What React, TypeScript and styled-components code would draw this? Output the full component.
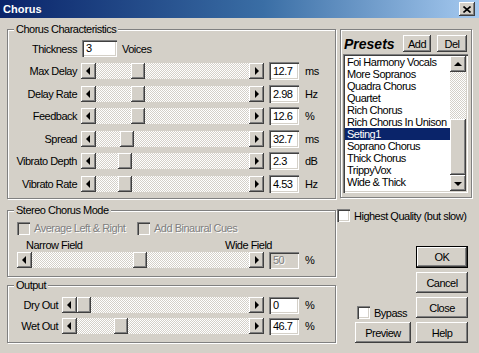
import React from "react";
import styled, { createGlobalStyle, css } from "styled-components";

const GlobalStyle = createGlobalStyle`
  html, body {
    margin: 0;
    padding: 0;
    background: #d4d0c8;
  }
  body {
    font-family: "Liberation Sans", Arial, sans-serif;
    font-size: 11px;
    letter-spacing: -0.5px;
    color: #000;
  }
`;

const raised = css`
  background: #d4d0c8;
  box-shadow: inset -1px -1px #404040, inset 1px 1px #fff, inset -2px -2px #808080;
`;

const sunken = css`
  box-shadow: inset 1px 1px #808080, inset 2px 2px #404040, inset -1px -1px #fff,
    inset -2px -2px #d4d0c8;
`;

const checker = css`
  background: repeating-conic-gradient(#fff 0 25%, #d4d0c8 0 50%) 0 0 / 2px 2px;
`;

const Window = styled.div`
  width: 479px;
  height: 353px;
  overflow: hidden;
  background: #d4d0c8;
`;

const TitleBar = styled.div`
  height: 18px;
  display: flex;
  align-items: center;
  padding: 0 4px 0 3px;
  background: linear-gradient(to right, #0a246a, #3a6ea5 55%, #a6caf0);
`;

const Title = styled.span`
  color: #fff;
  font-weight: bold;
  font-size: 11px;
  letter-spacing: 0;
`;

const CloseButton = styled.div`
  ${raised};
  margin-left: auto;
  width: 16px;
  height: 14px;
  display: grid;
  place-items: center;
`;

const Body = styled.div`
  display: flex;
  padding-left: 7px;
`;

const LeftCol = styled.div`
  width: 329px;
  display: flex;
  flex-direction: column;
`;

const RightCol = styled.div`
  flex: 1;
  margin-left: 1px;
  display: flex;
  flex-direction: column;
`;

const Group = styled.div<{ $mt: number; $pt: number; $pb: number; $pl?: number; $w?: number }>`
  position: relative;
  margin-top: ${(p) => p.$mt}px;
  padding: ${(p) => p.$pt}px 0 ${(p) => p.$pb}px ${(p) => p.$pl ?? 0}px;
  width: ${(p) => (p.$w ? `${p.$w}px` : "auto")};
  border: 1px solid #808080;
  box-shadow: inset 1px 1px #fff, 1px 1px #fff;
  box-sizing: border-box;
`;

const Legend = styled.span`
  position: absolute;
  top: -7px;
  left: 6px;
  padding: 0 2px;
  line-height: 13px;
  background: #d4d0c8;
`;

const Row = styled.div<{ $h: number; $mt?: number; $pl?: number }>`
  display: flex;
  align-items: center;
  height: ${(p) => p.$h}px;
  margin-top: ${(p) => p.$mt ?? 0}px;
  padding-left: ${(p) => p.$pl ?? 0}px;
`;

const Label = styled.span<{ $w: number }>`
  width: ${(p) => p.$w}px;
  text-align: right;
  white-space: nowrap;
`;

const TextBox = styled.div<{ $w: number; $h: number; $ml: number; $disabled?: boolean }>`
  ${sunken};
  background: ${(p) => (p.$disabled ? "#d4d0c8" : "#fff")};
  color: ${(p) => (p.$disabled ? "#808080" : "#000")};
  text-shadow: ${(p) => (p.$disabled ? "1px 1px #fff" : "none")};
  width: ${(p) => p.$w}px;
  height: ${(p) => p.$h}px;
  margin-left: ${(p) => p.$ml}px;
  line-height: ${(p) => p.$h}px;
  padding-left: 4px;
  box-sizing: border-box;
`;

const Unit = styled.span<{ $ml: number }>`
  margin-left: ${(p) => p.$ml}px;
`;

const SliderWrap = styled.div<{ $w: number; $ml: number }>`
  position: relative;
  display: flex;
  width: ${(p) => p.$w}px;
  height: 16px;
  margin-left: ${(p) => p.$ml}px;
`;

const ArrowButton = styled.div<{ $w?: number; $h?: number }>`
  ${raised};
  width: ${(p) => p.$w ?? 15}px;
  height: ${(p) => p.$h ?? 16}px;
  flex: none;
  display: grid;
  place-items: center;
`;

const Track = styled.div`
  ${checker};
  flex: 1;
`;

const Thumb = styled.div<{ $pos: number }>`
  ${raised};
  position: absolute;
  top: 0;
  left: ${(p) => p.$pos}px;
  width: 14px;
  height: 16px;
`;

const Arrow = styled.span<{ $dir: "left" | "right" | "up" | "down" }>`
  width: 0;
  height: 0;
  border: 4px solid transparent;
  ${(p) =>
    p.$dir === "left"
      ? "border-right-color: #000; border-left-width: 0; margin-left: -1px;"
      : p.$dir === "right"
      ? "border-left-color: #000; border-right-width: 0; margin-left: 1px;"
      : p.$dir === "up"
      ? "border-bottom-color: #000; border-top-width: 0; margin-top: -1px;"
      : "border-top-color: #000; border-bottom-width: 0; margin-top: 1px;"}
`;

const CheckBox = styled.span<{ $disabled?: boolean }>`
  ${sunken};
  width: 13px;
  height: 13px;
  flex: none;
  background: ${(p) => (p.$disabled ? "#d4d0c8" : "#fff")};
`;

const CheckItem = styled.div<{ $w?: number; $disabled?: boolean }>`
  display: flex;
  align-items: center;
  gap: 4px;
  width: ${(p) => (p.$w ? `${p.$w}px` : "auto")};
  color: ${(p) => (p.$disabled ? "#808080" : "#000")};
  text-shadow: ${(p) => (p.$disabled ? "1px 1px #fff" : "none")};
  white-space: nowrap;
`;

const FieldLabels = styled.div`
  display: flex;
  justify-content: space-between;
  width: 246px;
  height: 12px;
  line-height: 12px;
  margin: 4px 0 0 18px;
`;

const PresetHeader = styled.div`
  display: flex;
  align-items: center;
  padding: 0 4px 0 3px;
`;

const PresetTitle = styled.span`
  font-size: 14px;
  font-weight: bold;
  font-style: italic;
  letter-spacing: 0;
  margin-right: auto;
`;

const Button = styled.div<{ $w: number; $h: number; $default?: boolean }>`
  ${raised};
  width: ${(p) => p.$w}px;
  height: ${(p) => p.$h}px;
  display: grid;
  place-items: center;
  box-sizing: border-box;
  ${(p) =>
    p.$default &&
    css`
      border: 1px solid #000;
    `}
`;

const ListBox = styled.div`
  ${sunken};
  background: #fff;
  display: flex;
  width: 125px;
  height: 139px;
  margin: 2px 0 0 2px;
  padding: 2px;
  box-sizing: border-box;
`;

const Items = styled.div`
  flex: 1;
  overflow: hidden;
`;

const Item = styled.div<{ $selected?: boolean }>`
  height: 12px;
  line-height: 12px;
  padding-left: 2px;
  white-space: nowrap;
  background: ${(p) => (p.$selected ? "#0a246a" : "transparent")};
  color: ${(p) => (p.$selected ? "#fff" : "#000")};
`;

const ScrollBar = styled.div`
  width: 16px;
  display: flex;
  flex-direction: column;
`;

const ScrollTrack = styled.div`
  ${checker};
  flex: 1;
  display: flex;
  flex-direction: column;
  justify-content: flex-end;
`;

const ScrollThumb = styled.div`
  ${raised};
  height: 56px;
`;

const ButtonArea = styled.div`
  display: flex;
  justify-content: flex-end;
  align-items: flex-end;
  gap: 5px;
  margin-top: 24px;
  padding-right: 11px;
`;

const ButtonStack = styled.div`
  display: flex;
  flex-direction: column;
  gap: 4px;
`;

const PreviewCol = styled.div`
  display: flex;
  flex-direction: column;
  gap: 3px;
`;

type SliderProps = { width: number; ml: number; pos: number };

function Slider({ width, ml, pos }: SliderProps) {
  return (
    <SliderWrap $w={width} $ml={ml}>
      <ArrowButton>
        <Arrow $dir="left" />
      </ArrowButton>
      <Track />
      <ArrowButton>
        <Arrow $dir="right" />
      </ArrowButton>
      <Thumb $pos={pos} />
    </SliderWrap>
  );
}

const characteristics = [
  { label: "Max Delay", value: "12.7", unit: "ms", pos: 50 },
  { label: "Delay Rate", value: "2.98", unit: "Hz", pos: 50 },
  { label: "Feedback", value: "12.6", unit: "%", pos: 50 },
  { label: "Spread", value: "32.7", unit: "ms", pos: 39 },
  { label: "Vibrato Depth", value: "2.3", unit: "dB", pos: 37 },
  { label: "Vibrato Rate", value: "4.53", unit: "Hz", pos: 37 },
];

const outputs = [
  { label: "Dry Out", value: "0", pos: 15 },
  { label: "Wet Out", value: "46.7", pos: 52 },
];

const presets = [
  "Foi Harmony Vocals",
  "More Sopranos",
  "Quadra Chorus",
  "Quartet",
  "Rich Chorus",
  "Rich Chorus In Unison",
  "Seting1",
  "Soprano Chorus",
  "Thick Chorus",
  "TrippyVox",
  "Wide & Thick",
];

export default function App() {
  return (
    <>
      <GlobalStyle />
      <Window>
        <TitleBar>
          <Title>Chorus</Title>
          <CloseButton>
            <svg width="8" height="7" viewBox="0 0 8 7">
              <path d="M0.5 0.5L7.5 6.5M7.5 0.5L0.5 6.5" stroke="#000" strokeWidth="1.6" />
            </svg>
          </CloseButton>
        </TitleBar>
        <Body>
          <LeftCol>
            <Group $mt={11} $pt={10} $pb={5} $pl={4}>
              <Legend>Chorus Characteristics</Legend>
              <Row $h={17}>
                <Label $w={65}>Thickness</Label>
                <TextBox $w={35} $h={17} $ml={5}>
                  3
                </TextBox>
                <Unit $ml={5}>Voices</Unit>
              </Row>
              {characteristics.map((c, i) => (
                <Row key={c.label} $h={18} $mt={i === 0 ? 5 : 4.6}>
                  <Label $w={65}>{c.label}</Label>
                  <Slider width={183} ml={4} pos={c.pos} />
                  <TextBox $w={30} $h={18} $ml={5}>
                    {c.value}
                  </TextBox>
                  <Unit $ml={6}>{c.unit}</Unit>
                </Row>
              ))}
            </Group>

            <Group $mt={11} $pt={11} $pb={7}>
              <Legend>Stereo Chorus Mode</Legend>
              <Row $h={13} $pl={9}>
                <CheckItem $w={120} $disabled>
                  <CheckBox $disabled />
                  Average Left &amp; Right
                </CheckItem>
                <CheckItem $disabled>
                  <CheckBox $disabled />
                  Add Binaural Cues
                </CheckItem>
              </Row>
              <FieldLabels>
                <span>Narrow Field</span>
                <span>Wide Field</span>
              </FieldLabels>
              <Row $h={17} $mt={1} $pl={9}>
                <Slider width={247} ml={0} pos={116} />
                <TextBox $w={30} $h={17} $ml={5} $disabled>
                  50
                </TextBox>
                <Unit $ml={6}>%</Unit>
              </Row>
            </Group>

            <Group $mt={8} $pt={11} $pb={7} $pl={4}>
              <Legend>Output</Legend>
              {outputs.map((o, i) => (
                <Row key={o.label} $h={17} $mt={i === 0 ? 0 : 4}>
                  <Label $w={46}>{o.label}</Label>
                  <Slider width={202} ml={4} pos={o.pos} />
                  <TextBox $w={30} $h={17} $ml={5}>
                    {o.value}
                  </TextBox>
                  <Unit $ml={6}>%</Unit>
                </Row>
              ))}
            </Group>
          </LeftCol>

          <RightCol>
            <Group $mt={11} $pt={5} $pb={4} $w={132} style={{ marginLeft: 3 }}>
              <PresetHeader>
                <PresetTitle>Presets</PresetTitle>
                <Button $w={28} $h={17}>
                  Add
                </Button>
                <Button $w={30} $h={17} style={{ marginLeft: 6 }}>
                  Del
                </Button>
              </PresetHeader>
              <ListBox>
                <Items>
                  {presets.map((p) => (
                    <Item key={p} $selected={p === "Seting1"}>
                      {p}
                    </Item>
                  ))}
                </Items>
                <ScrollBar>
                  <ArrowButton $w={16} $h={16}>
                    <Arrow $dir="up" />
                  </ArrowButton>
                  <ScrollTrack>
                    <ScrollThumb />
                  </ScrollTrack>
                  <ArrowButton $w={16} $h={16}>
                    <Arrow $dir="down" />
                  </ArrowButton>
                </ScrollBar>
              </ListBox>
            </Group>

            <Row $h={13} $mt={11}>
              <CheckItem>
                <CheckBox />
                Highest Quality (but slow)
              </CheckItem>
            </Row>

            <ButtonArea>
              <PreviewCol>
                <Row $h={13} $pl={2}>
                  <CheckItem>
                    <CheckBox />
                    Bypass
                  </CheckItem>
                </Row>
                <Button $w={56} $h={21}>
                  Preview
                </Button>
              </PreviewCol>
              <ButtonStack>
                <Button $w={52} $h={22} $default>
                  OK
                </Button>
                <Button $w={52} $h={21}>
                  Cancel
                </Button>
                <Button $w={52} $h={21}>
                  Close
                </Button>
                <Button $w={52} $h={21}>
                  Help
                </Button>
              </ButtonStack>
            </ButtonArea>
          </RightCol>
        </Body>
      </Window>
    </>
  );
}
